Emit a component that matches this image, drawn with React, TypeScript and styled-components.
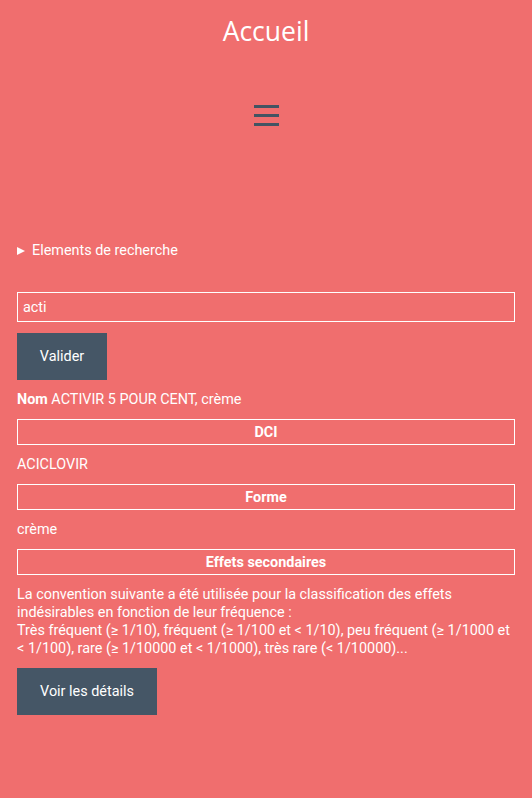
import React from "react";
import styled, { createGlobalStyle } from "styled-components";

const Global = createGlobalStyle`
  html, body { margin: 0; padding: 0; background: #f06e6e; }
  body { font-family: Roboto, "Liberation Sans", sans-serif; color: #fff; font-size: 14.4px; }
  * { box-sizing: border-box; }
`;

const Page = styled.div`
  min-height: 798px;
  background: #f06e6e;
  padding: 0 17px 40px;
`;

const Header = styled.header`
  display: flex;
  flex-direction: column;
  align-items: center;
`;

const Title = styled.h1`
  margin: 12px 0 0;
  font-family: "Open Sans", "Noto Sans", sans-serif;
  font-weight: 400;
  font-size: 26.5px;
  line-height: 39px;
  color: #fff;
`;

const Burger = styled.button`
  margin-top: 54px;
  width: 25px;
  padding: 0;
  border: 0;
  background: transparent;
  display: flex;
  flex-direction: column;
  gap: 6px;
  cursor: pointer;
`;

const BurgerLine = styled.span`
  display: block;
  height: 3px;
  width: 25px;
  background: #435463;
`;

const Details = styled.details`
  margin-top: 115px;
`;

const Summary = styled.summary`
  cursor: pointer;
  line-height: 20px;
  list-style: none;
  display: flex;
  align-items: center;
  gap: 7px;
  &::-webkit-details-marker { display: none; }
`;

const Triangle = styled.span`
  width: 0;
  height: 0;
  border-top: 4px solid transparent;
  border-bottom: 4px solid transparent;
  border-left: 8px solid #fff;
`;

const Form = styled.form`
  margin-top: 31px;
  display: flex;
  flex-direction: column;
  align-items: flex-start;
  gap: 11px;
`;

const Input = styled.input`
  width: 100%;
  height: 30px;
  border: 1px solid #fff;
  background: transparent;
  color: #fff;
  font-family: Roboto, sans-serif;
  font-size: 14.4px;
  padding: 0 5px;
  outline: none;
`;

const Button = styled.button<{ $w: number }>`
  width: ${(p) => p.$w}px;
  height: 47px;
  background: #455666;
  border: 0;
  color: #fff;
  font-family: Roboto, sans-serif;
  font-size: 14.4px;
  cursor: pointer;
`;

const Result = styled.div`
  margin-top: 10px;
  display: flex;
  flex-direction: column;
`;

const Line = styled.p`
  margin: 0;
  line-height: 20px;
`;

const Label = styled.div`
  margin: 9px 0 10px;
  height: 26px;
  border: 1px solid #fff;
  display: flex;
  align-items: center;
  justify-content: center;
  font-weight: 700;
`;

const Paragraph = styled.p`
  margin: 1px 0 10px;
  line-height: 18px;
`;

export default function App() {
  return (
    <Page>
      <Global />
      <Header>
        <Title>Accueil</Title>
        <Burger aria-label="menu">
          <BurgerLine />
          <BurgerLine />
          <BurgerLine />
        </Burger>
      </Header>
      <Details>
        <Summary>
          <Triangle />
          Elements de recherche
        </Summary>
      </Details>
      <Form onSubmit={(e) => e.preventDefault()}>
        <Input defaultValue="acti" />
        <Button $w={90} type="submit">Valider</Button>
      </Form>
      <Result>
        <Line>
          <b>Nom</b> ACTIVIR 5 POUR CENT, crème
        </Line>
        <Label>DCI</Label>
        <Line>ACICLOVIR</Line>
        <Label>Forme</Label>
        <Line>crème</Line>
        <Label>Effets secondaires</Label>
        <Paragraph>
          La convention suivante a été utilisée pour la classification des effets indésirables en fonction de leur fréquence :
          <br />
          Très fréquent (≥ 1/10), fréquent (≥ 1/100 et &lt; 1/10), peu fréquent (≥ 1/1000 et &lt; 1/100), rare (≥ 1/10000 et &lt; 1/1000), très rare (&lt; 1/10000)...
        </Paragraph>
        <Button $w={140}>Voir les détails</Button>
      </Result>
    </Page>
  );
}
